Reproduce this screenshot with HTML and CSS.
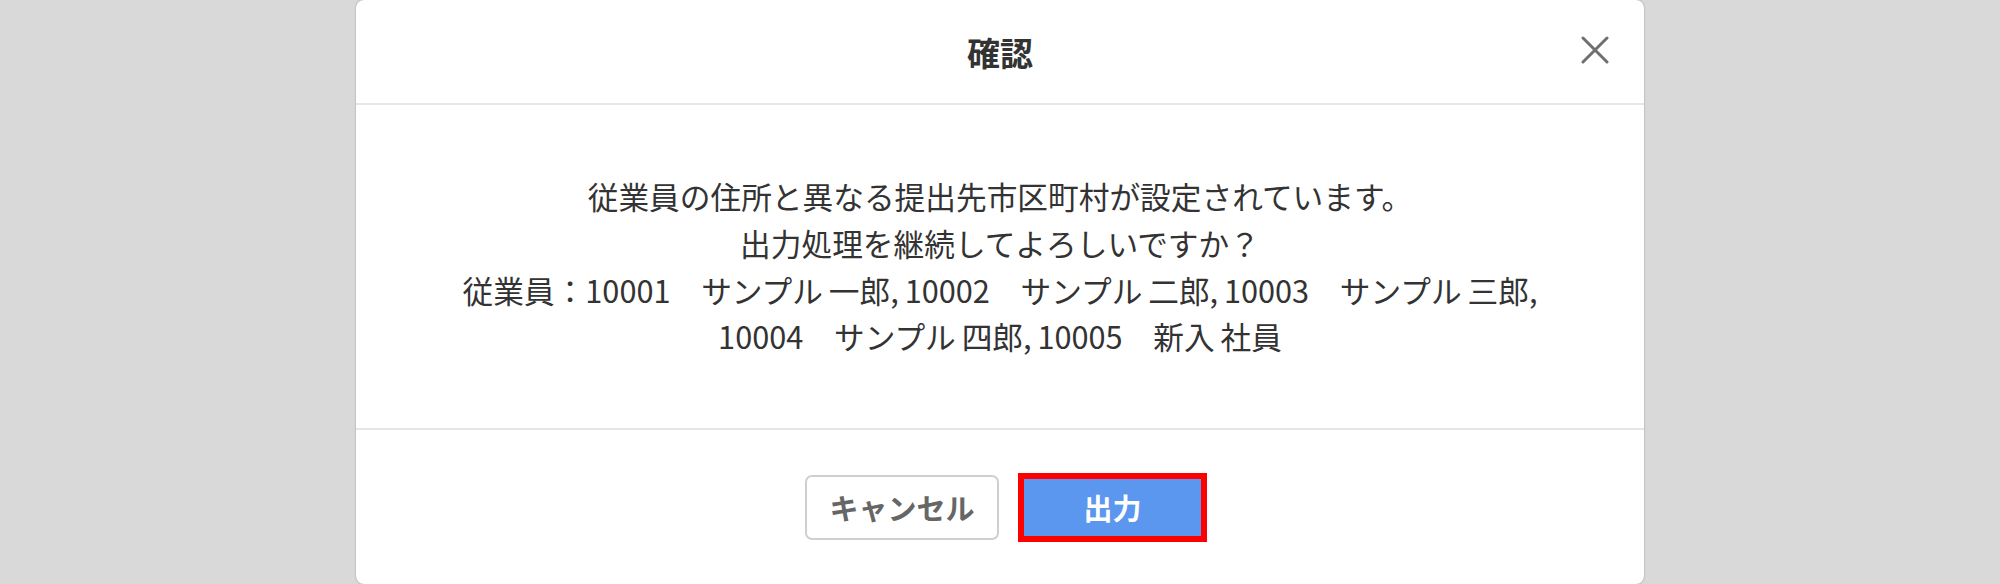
FILE: index.html
```html
<!DOCTYPE html>
<html lang="ja">
<head>
  <meta charset="UTF-8" />
  <title>確認</title>
  <link rel="stylesheet" href="styles.css">
</head>
<body>

<div class="overlay">
  <div class="modal">
    <div class="modal-header">
      <h2 class="modal-title">確認</h2>
      <button class="close-btn" aria-label="閉じる">
        <svg width="28" height="28" viewBox="0 0 28 28">
          <path d="M2 2 L26 26 M26 2 L2 26" stroke="#6f6f6f" stroke-width="3" stroke-linecap="round" fill="none"/>
        </svg>
      </button>
    </div>

    <div class="modal-body">
      <p class="message">
        従業員の住所と異なる提出先市区町村が設定されています。<br>
        出力処理を継続してよろしいですか？<br>
        従業員：10001　サンプル 一郎, 10002　サンプル 二郎, 10003　サンプル 三郎,<br>
        10004　サンプル 四郎, 10005　新入 社員
      </p>
    </div>

    <div class="modal-footer">
      <button class="btn btn-cancel">キャンセル</button>
      <button class="btn btn-primary highlight">出力</button>
    </div>
  </div>
</div>

</body>
</html>
```

FILE: styles.css
```css
html, body {
  margin: 0;
  height: 100%;
}
body {
  background: #d9d9d9;
  font-family: "Noto Sans CJK JP", "Noto Sans", sans-serif;
  color: #333;
}
.overlay {
  display: flex;
  justify-content: center;
  height: 100%;
}
.modal {
  width: 1288px;
  height: 584px;
  background: #fff;
  border-radius: 8px;
  box-shadow: 0 0 2px rgba(0, 0, 0, 0.35);
  display: flex;
  flex-direction: column;
}
.modal-header {
  height: 103px;
  border-bottom: 2px solid #e6e6e6;
  display: flex;
  align-items: center;
  justify-content: center;
  position: relative;
}
.modal-title {
  margin: 0;
  font-size: 33px;
  font-weight: bold;
  color: #333;
}
.close-btn {
  position: absolute;
  right: 35px;
  top: 36px;
  width: 28px;
  height: 28px;
  padding: 0;
  border: 0;
  background: none;
  cursor: pointer;
}
.close-btn svg {
  display: block;
}
.modal-body {
  flex: 1;
  display: flex;
  align-items: center;
  justify-content: center;
  border-bottom: 2px solid #e6e6e6;
}
.message {
  margin: 0;
  font-size: 30.7px;
  line-height: 46.7px;
  word-spacing: -1px;
  text-align: center;
  color: #333;
}
.modal-footer {
  height: 154px;
  display: flex;
  align-items: center;
  justify-content: center;
  gap: 19px;
  padding-left: 12px;
}
.btn {
  font-family: inherit;
  font-weight: bold;
  font-size: 29px;
  box-sizing: border-box;
  cursor: pointer;
}
.btn-cancel {
  width: 194px;
  height: 65px;
  background: #fff;
  color: #666;
  border: 2px solid #cfcfcf;
  border-radius: 7px;
}
.btn-primary {
  width: 189px;
  height: 69px;
  background: #5b96ef;
  color: #fff;
  border: 0;
}
.highlight {
  border: 6px solid #ff0000;
}
```
